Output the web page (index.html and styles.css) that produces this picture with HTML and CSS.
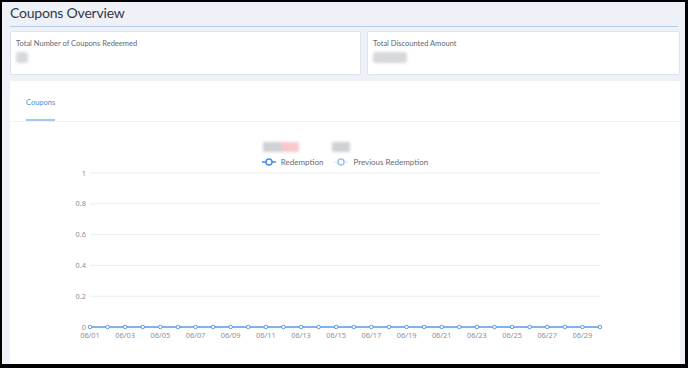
FILE: index.html
```html
<!DOCTYPE html>
<html lang="en">

<head>
    <meta charset="UTF-8">
    <meta name="viewport" content="width=device-width, initial-scale=1.0">
    <title>Coupons Overview</title>
    <link rel="stylesheet" href="styles.css">
</head>

<body>

    <div class="page">
        <!-- Page title -->
        <div class="page-header">
            <h1>Coupons Overview</h1>
        </div>

        <!-- Summary cards -->
        <div class="stats">
            <div class="stat-card">
                <div class="stat-label">Total Number of Coupons Redeemed</div>
                <div class="stat-value blur small"></div>
            </div>
            <div class="stat-card">
                <div class="stat-label">Total Discounted Amount</div>
                <div class="stat-value blur wide"></div>
            </div>
        </div>

        <!-- Chart panel -->
        <div class="panel">
            <div class="tabs">
                <div class="tab active">Coupons</div>
            </div>

            <div class="totals">
                <div class="total blur"><span class="grey"></span><span class="red"></span></div>
                <div class="total blur"><span class="grey"></span></div>
            </div>

            <div class="legend">
                <div class="legend-item">
                    <svg width="14" height="8" viewBox="0 0 14 8"><line x1="0" y1="4" x2="14" y2="4" stroke="#4a8fdf" stroke-width="1.5"/><circle cx="7" cy="4" r="3" fill="#fff" stroke="#4a8fdf" stroke-width="1.5"/></svg>
                    Redemption
                </div>
                <div class="legend-item">
                    <svg width="14" height="8" viewBox="0 0 14 8"><line x1="0" y1="4" x2="14" y2="4" stroke="#e4eefb" stroke-width="1.5"/><circle cx="7" cy="4" r="3" fill="#fff" stroke="#9cc2ef" stroke-width="1.5"/></svg>
                    Previous Redemption
                </div>
            </div>

            <svg class="chart" id="chart" width="670" height="196" viewBox="0 0 670 196"></svg>
        </div>
    </div>

    <script>
        const chart = document.getElementById('chart');
        const ns = 'http://www.w3.org/2000/svg';
        const plotLeft = 80, plotRight = 590, plotTop = 6, plotBottom = 160;

        function add(tag, attrs, text) {
            const el = document.createElementNS(ns, tag);
            for (const k in attrs) el.setAttribute(k, attrs[k]);
            if (text) el.textContent = text;
            chart.appendChild(el);
            return el;
        }

        // grid lines + y labels
        ['1', '0.8', '0.6', '0.4', '0.2', '0'].forEach((label, i) => {
            const y = plotTop + (plotBottom - plotTop) * i / 5;
            add('line', { x1: plotLeft, y1: y, x2: plotRight, y2: y, stroke: '#eceef2', 'stroke-width': 1 });
            add('text', { x: plotLeft - 4, y: y + 2.5, 'text-anchor': 'end', class: 'axis' }, label);
        });

        // redemption series, all zero for June
        const step = (plotRight - plotLeft) / 29;
        add('line', { x1: plotLeft, y1: plotBottom, x2: plotRight, y2: plotBottom, stroke: '#5b9be3', 'stroke-width': 1.5 });
        for (let d = 0; d < 30; d++) {
            const x = plotLeft + step * d;
            add('circle', { cx: x, cy: plotBottom, r: 1.8, fill: '#fff', stroke: '#5b9be3', 'stroke-width': 1 });
            if (d % 2 === 0) {
                const day = String(d + 1).padStart(2, '0');
                add('text', { x: x, y: plotBottom + 11, 'text-anchor': 'middle', class: 'axis' }, '06/' + day);
            }
        }
    </script>

</body>

</html>
```

FILE: styles.css
```css
* {
    margin: 0;
    padding: 0;
    box-sizing: border-box;
}

body {
    font-family: 'Lato', 'Open Sans', sans-serif;
    background-color: #000;
    width: 688px;
    height: 368px;
    padding: 2px 3px 4px 2px;
    overflow: hidden;
}

.page {
    background-color: #eef1f7;
    height: 100%;
    padding: 0 5px 0 8px;
    overflow: hidden;
}

.page-header {
    height: 25px;
    border-bottom: 1px solid #b5cbe9;
    margin-right: 2px;
}

.page-header h1 {
    font-size: 14px;
    font-weight: 400;
    color: #333844;
    line-height: 22px;
    letter-spacing: -0.2px;
}

.stats {
    display: grid;
    grid-template-columns: 351px 1fr;
    gap: 6px;
    margin-top: 4px;
}

.stat-card {
    background-color: #fff;
    border: 1px solid #dfe4ec;
    border-radius: 2px;
    height: 44px;
    padding: 6px 5px;
}

.stat-label {
    font-size: 7.5px;
    color: #626873;
    line-height: 11px;
}

.blur {
    filter: blur(1.5px);
}

.stat-value {
    height: 11px;
    margin-top: 3px;
    background-color: #d6d8dc;
    border-radius: 3px;
}

.stat-value.small {
    width: 12px;
}

.stat-value.wide {
    width: 34px;
}

.panel {
    background-color: #fff;
    margin-top: 6px;
    height: 290px;
    border-radius: 2px;
}

.tabs {
    display: flex;
    padding: 0 16px;
    border-bottom: 1px solid #f0f2f5;
}

.tab {
    font-size: 7.5px;
    color: #8a929e;
    padding: 16px 0 11px;
    line-height: 11px;
    border-bottom: 2px solid transparent;
}

.tab.active {
    color: #4a8fdf;
    border-bottom-color: #a7c7ef;
}

.totals {
    display: flex;
    gap: 33px;
    padding-left: 253px;
    margin-top: 20px;
    height: 10px;
}

.total {
    display: flex;
}

.total span {
    height: 10px;
    display: block;
}

.total .grey {
    width: 18px;
    background-color: #cfd1d5;
}

.total .red {
    width: 18px;
    background-color: #f7c9cc;
}

.legend {
    display: flex;
    justify-content: center;
    gap: 11px;
    margin-top: 5px;
    font-size: 8px;
    color: #666c75;
    line-height: 10px;
}

.legend-item {
    display: flex;
    align-items: center;
    gap: 5px;
}

.chart {
    display: block;
    margin-top: 0;
}

.chart .axis {
    font-family: 'Noto Sans', sans-serif;
    font-size: 7.4px;
    fill: #8c9099;
}
```
